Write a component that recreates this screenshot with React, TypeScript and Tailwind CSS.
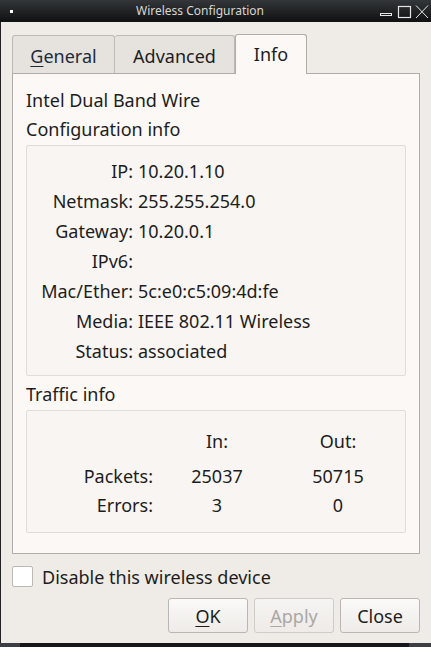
import React from "react";

const font = { fontFamily: '"Noto Sans", "DejaVu Sans", sans-serif' };

function Row({ label, value }: { label: string; value: string }) {
  return (
    <div className="flex h-[30px] items-center">
      <div className="w-[106px] whitespace-nowrap text-right">{label}</div>
      <div className="whitespace-nowrap pl-[5px]">{value}</div>
    </div>
  );
}

export default function App() {
  return (
    <div
      className="relative flex h-[647px] w-[431px] flex-col overflow-hidden bg-[#efebe7] text-[18px] leading-none text-[#1d1d1d]"
      style={font}
    >
      {/* title bar */}
      <div className="relative flex h-[22px] shrink-0 items-center justify-center bg-gradient-to-b from-[#34373a] to-[#0f1011] pr-[31px] text-[12px] text-[#d6d6d6]">
        <div className="absolute left-[10px] top-[10px] h-[3px] w-[3px] bg-white" />
        <span>Wireless Configuration</span>
        <svg className="absolute right-0 top-0" width="56" height="22" viewBox="0 0 56 22">
          <rect x="5.5" y="13.5" width="11" height="2" fill="none" stroke="#e6e6e6" strokeWidth="1" />
          <rect x="23.5" y="6.5" width="12" height="11" fill="none" stroke="#e6e6e6" strokeWidth="1.2" />
          <path d="M41 5.5 L53 18 M41 18 L53 5.5" stroke="#e6e6e6" strokeWidth="1" fill="none" />
        </svg>
      </div>

      <div className="flex flex-1 flex-col border-l border-[#222] pl-[11px] pr-[11px]">
        {/* tabs */}
        <div className="mt-[12px] flex h-[39px] items-end">
          <div className="flex h-[38px] w-[103px] items-center justify-center rounded-t-[3px] border border-b-0 border-[#bdb9b5] bg-[#e6e3df] pt-[3px] text-[#1d2a3a]">
            <span>
              <span className="underline decoration-1 underline-offset-[3px]">G</span>eneral
            </span>
          </div>
          <div className="flex h-[38px] w-[120px] items-center justify-center rounded-t-[3px] border border-b-0 border-l-0 border-[#bdb9b5] bg-[#e6e3df] pt-[3px]">
            Advanced
          </div>
          <div className="relative z-10 -mb-px flex h-[40px] w-[72px] items-center justify-center rounded-t-[3px] border border-b-0 border-[#b0aca8] bg-[#fbf8f6] pb-[1px]">
            Info
          </div>
        </div>

        {/* pane */}
        <div className="flex h-[481px] flex-col border border-[#b0aca8] bg-[#fbf8f6] px-[13px] pt-[12px]">
          <div className="flex h-[27px] items-center">Intel Dual Band Wire</div>
          <div className="flex h-[31px] items-center">Configuration info</div>
          <div className="mt-[1px] flex h-[231px] flex-col rounded-[2px] border border-[#e0dcd8] bg-[#f8f5f2] pt-[10px]">
            <Row label="IP:" value="10.20.1.10" />
            <Row label="Netmask:" value="255.255.254.0" />
            <Row label="Gateway:" value="10.20.0.1" />
            <Row label="IPv6:" value="" />
            <Row label="Mac/Ether:" value="5c:e0:c5:09:4d:fe" />
            <Row label="Media:" value="IEEE 802.11 Wireless" />
            <Row label="Status:" value="associated" />
          </div>
          <div className="flex h-[34px] items-center pt-[2px]">Traffic info</div>
          <div className="flex h-[123px] flex-col rounded-[2px] border border-[#e0dcd8] bg-[#f8f5f2] pt-[16px]">
            <div className="flex h-[28px] items-center">
              <div className="w-[126px]" />
              <div className="w-[128px] text-center">In:</div>
              <div className="w-[114px] text-center">Out:</div>
            </div>
            <div className="mt-[7px] flex h-[28px] items-center">
              <div className="w-[126px] text-right">Packets:</div>
              <div className="w-[128px] text-center">25037</div>
              <div className="w-[114px] text-center">50715</div>
            </div>
            <div className="flex h-[30px] items-center">
              <div className="w-[126px] text-right">Errors:</div>
              <div className="w-[128px] text-center">3</div>
              <div className="w-[114px] text-center">0</div>
            </div>
          </div>
        </div>

        {/* checkbox */}
        <div className="mt-[12px] flex items-center">
          <div className="h-[21px] w-[21px] rounded-[2px] border border-[#bcb8b4] bg-white" />
          <span className="ml-[9px]">Disable this wireless device</span>
        </div>

        {/* buttons */}
        <div className="mt-[11px] flex justify-end gap-[6px]">
          <div className="flex h-[35px] w-[80px] items-center justify-center rounded-[3px] border border-[#bab6b2] bg-gradient-to-b from-[#fbfaf9] to-[#eeebe8]">
            <span>
              <span className="underline decoration-1 underline-offset-[3px]">O</span>K
            </span>
          </div>
          <div className="flex h-[35px] w-[80px] items-center justify-center rounded-[3px] border border-[#cfcbc7] bg-gradient-to-b from-[#f6f4f2] to-[#eeebe8] text-[#aaa7a4]">
            <span>
              <span className="underline decoration-1 underline-offset-[3px]">A</span>pply
            </span>
          </div>
          <div className="flex h-[35px] w-[80px] items-center justify-center rounded-[3px] border border-[#bab6b2] bg-gradient-to-b from-[#fbfaf9] to-[#eeebe8]">
            Close
          </div>
        </div>
      </div>

      {/* bottom strip */}
      <div className="flex h-[4px] shrink-0 bg-[#15171a]">
        <div className="w-[20px] bg-[#3b3e42]" />
        <div className="flex-1" />
        <div className="w-[22px] bg-[#3b3e42]" />
      </div>
    </div>
  );
}
